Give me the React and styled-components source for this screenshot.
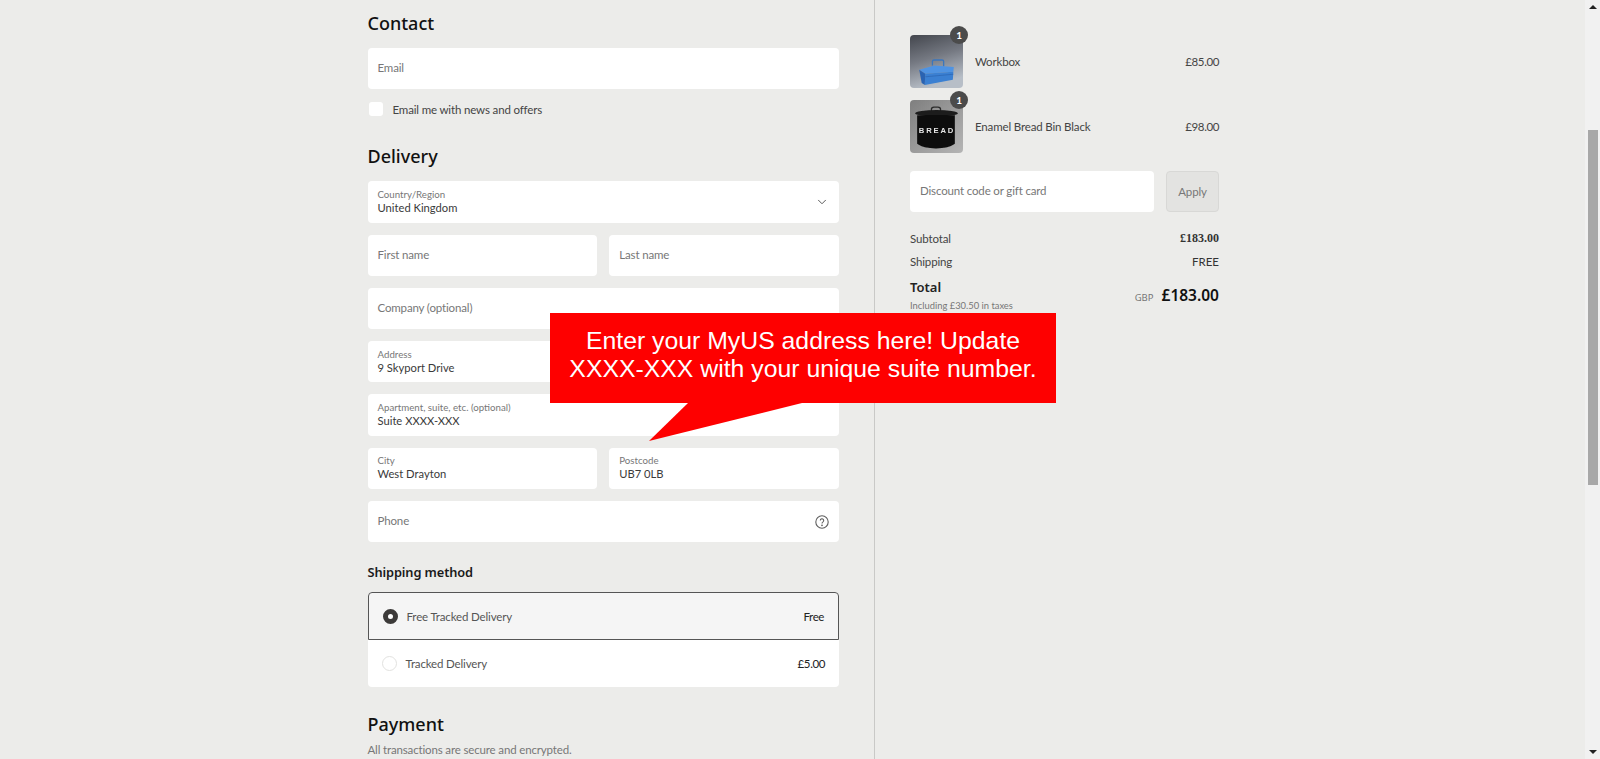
import React from 'react'
import styled, { createGlobalStyle } from 'styled-components'
import { ChevronDown } from 'lucide-react'

const GlobalStyle = createGlobalStyle`
  html, body {
    margin: 0;
    padding: 0;
    height: 100%;
    overflow: hidden;
    background: #ececea;
  }
  * { box-sizing: border-box; }
`

const Page = styled.div`
  position: relative;
  display: flex;
  height: 759px;
  overflow: hidden;
  font-family: Lato, "Noto Sans", "Liberation Sans", sans-serif;
  font-size: 11.5px;
  letter-spacing: -0.15px;
  color: #333;
  background: #ececea;
`

const FormColumn = styled.main`
  width: 875px;
  padding: 11px 35px 0 367.5px;
  border-right: 1px solid #c9c9c7;
`

const SummaryColumn = styled.aside`
  flex: 1;
  padding: 35px 0 0 35px;
`

const Heading = styled.h2`
  margin: ${p => p.$top || 0}px 0 ${p => p.$bottom || 0}px;
  font-family: "Noto Sans", sans-serif;
  font-size: 18px;
  font-weight: 500;
  line-height: 24px;
  letter-spacing: 0;
  color: #111;
`

const SubHeading = styled.h3`
  margin: 20px 0 10px;
  font-family: "Noto Sans", sans-serif;
  font-size: 12.8px;
  font-weight: 600;
  line-height: 20px;
  letter-spacing: -0.1px;
  color: #1a1a1a;
`

const Fields = styled.div`
  display: flex;
  flex-direction: column;
  gap: 12px;
`

const Row = styled.div`
  display: grid;
  grid-template-columns: 1fr 1fr;
  gap: 12px;
`

const Field = styled.div`
  display: flex;
  align-items: center;
  justify-content: space-between;
  height: 41.3px;
  padding: 0 10px;
  background: #fff;
  border-radius: 4px;
`

const FieldText = styled.div`
  display: flex;
  flex-direction: column;
  padding-bottom: 1px;
`

const Placeholder = styled.span`
  padding-bottom: 2px;
  color: #777;
`

const FloatLabel = styled.span`
  font-size: 9.7px;
  line-height: 13px;
  letter-spacing: 0;
  color: #777;
`

const FloatValue = styled.span`
  font-size: 11.2px;
  line-height: 14px;
  letter-spacing: 0;
  color: #3a3a3a;
`

const CheckRow = styled.label`
  display: flex;
  align-items: center;
  gap: 10px;
  height: 14px;
  margin-top: 13px;
  color: #444;
`

const CheckBox = styled.span`
  width: 14px;
  height: 14px;
  margin-left: 1px;
  background: #fff;
  border-radius: 3px;
`

const Methods = styled.div`
  background: #fff;
  border-radius: 4px;
`

const Method = styled.div`
  display: flex;
  align-items: center;
  height: 47.5px;
  padding: 0 14px;
  border-radius: ${p => (p.$selected ? '4px 4px 0 0' : '0')};
  background: ${p => (p.$selected ? '#f5f5f5' : 'transparent')};
  border: ${p => (p.$selected ? '1px solid #555' : 'none')};
`

const Radio = styled.span`
  width: 15px;
  height: 15px;
  margin-right: 9px;
  border-radius: 50%;
  background: #fff;
  border: ${p => (p.$on ? '5px solid #3c3a39' : '1px solid #e2e2e0')};
`

const MethodName = styled.span`
  flex: 1;
  color: #555;
`

const MethodPrice = styled.span`
  letter-spacing: -0.4px;
  color: #222;
`

const Note = styled.p`
  margin: 6px 0 0;
  line-height: 16px;
  color: #777;
`

const Item = styled.div`
  display: flex;
  align-items: center;
  height: 53px;
  margin-bottom: 12px;
`

const Thumb = styled.div`
  position: relative;
  width: 53px;
  height: 53px;
  margin-right: 12px;
  svg { display: block; border-radius: 4px; }
`

const Badge = styled.span`
  position: absolute;
  top: -9px;
  right: -5px;
  display: flex;
  align-items: center;
  justify-content: center;
  width: 18px;
  height: 18px;
  border-radius: 50%;
  background: #4b4b4b;
  color: #fff;
  font-size: 10px;
  font-weight: 700;
`

const ItemName = styled.span`
  flex: 1;
  color: #444;
`

const Summary = styled.div`
  width: 309px;
`

const ItemPrice = styled.span`
  letter-spacing: -0.4px;
  color: #444;
`

const DiscountRow = styled.div`
  display: flex;
  gap: 12px;
  margin: 18px 0 18px;
`

const DiscountInput = styled(Field)`
  flex: 1;
  height: 41px;
`

const ApplyButton = styled.button`
  width: 53px;
  height: 41px;
  padding: 0;
  border: 1px solid #d8d8d6;
  border-radius: 4px;
  background: #e3e3e1;
  color: #777;
  font: inherit;
  letter-spacing: inherit;
`

const Line = styled.div`
  display: flex;
  justify-content: space-between;
  align-items: center;
  height: 16px;
  margin-bottom: 7px;
  color: #444;
`

const Amount = styled.span`
  font-family: ${p => (p.$serif ? '"Liberation Serif", serif' : 'inherit')};
  font-weight: ${p => (p.$serif ? 700 : 400)};
  font-size: ${p => (p.$serif ? '12px' : 'inherit')};
  letter-spacing: 0;
  color: #333;
`

const TotalRow = styled.div`
  display: flex;
  justify-content: space-between;
  align-items: center;
  margin-top: 9px;
`

const TotalLabel = styled.div`
  font-family: "Noto Sans", sans-serif;
  font-size: 13px;
  font-weight: 600;
  line-height: 18px;
  letter-spacing: 0;
  color: #222;
`

const TaxNote = styled.div`
  margin-top: 4px;
  font-size: 9.4px;
  line-height: 12px;
  letter-spacing: 0;
  color: #777;
`

const TotalAmount = styled.div`
  display: flex;
  align-items: baseline;
  gap: 8px;
  font-family: "Noto Sans", sans-serif;
  letter-spacing: 0;
  span { font-size: 9.5px; color: #777; }
  strong { font-size: 15.5px; font-weight: 600; color: #111; }
`

const Callout = styled.div`
  position: absolute;
  left: 550px;
  top: 313px;
  width: 506px;
  height: 90px;
  display: flex;
  align-items: center;
  justify-content: center;
  padding-bottom: 6px;
  background: #fe0000;
  color: #fff;
  font-family: "Liberation Sans", Arial, sans-serif;
  font-size: 24.8px;
  line-height: 28px;
  letter-spacing: 0;
  text-align: center;
`

const CalloutTail = styled.svg`
  position: absolute;
  left: 99px;
  top: 90px;
`

const Scrollbar = styled.div`
  position: relative;
  flex: none;
  width: 15px;
  background: #f1f1f1;
`

const ScrollThumb = styled.div`
  position: absolute;
  left: 3px;
  right: 2px;
  top: 130px;
  height: 355px;
  background: #a8a8a8;
`

const ScrollArrow = styled.span`
  position: absolute;
  left: 4px;
  ${p => (p.$down ? 'bottom: 5px;' : 'top: 5px;')}
  border-left: 4px solid transparent;
  border-right: 4px solid transparent;
  ${p => (p.$down ? 'border-top: 4px solid #222;' : 'border-bottom: 4px solid #222;')}
`

function WorkboxImage() {
  return (
    <svg width="53" height="53" viewBox="0 0 52 52">
      <defs>
        <linearGradient id="wbBg" x1="0" y1="0" x2="0.3" y2="1">
          <stop offset="0" stopColor="#43464d" />
          <stop offset="0.5" stopColor="#757982" />
          <stop offset="1" stopColor="#b7bec7" />
        </linearGradient>
        <filter id="soft"><feGaussianBlur stdDeviation="0.45" /></filter>
      </defs>
      <rect width="52" height="52" fill="url(#wbBg)" />
      <g filter="url(#soft)">
        <path d="M22 30v-4q0-1.500 1.500-1.500h8q1.500 0 1.500 1.500v5" fill="none" stroke="#3a76bd" strokeWidth="1.300" />
        <path d="M9 34L24 30 43 31.500 42.500 36 15 38z" fill="#4f93e2" />
        <path d="M15 38L42.500 36 42 44 14.500 49z" fill="#3a80d2" />
        <path d="M9 34L15 38 14.500 49 11.500 47z" fill="#2b64b2" />
        <path d="M15 41L42.500 38.500" stroke="#2b64b2" strokeWidth="0.700" />
      </g>
    </svg>
  )
}

function BreadBinImage() {
  return (
    <svg width="53" height="53" viewBox="0 0 52 52">
      <defs>
        <linearGradient id="bbBg" x1="0" y1="0" x2="1" y2="1">
          <stop offset="0" stopColor="#7f7f7f" />
          <stop offset="1" stopColor="#b5b5b5" />
        </linearGradient>
        <filter id="soft2"><feGaussianBlur stdDeviation="0.35" /></filter>
      </defs>
      <rect width="52" height="52" fill="url(#bbBg)" />
      <g filter="url(#soft2)">
        <path d="M21 12V9.500q0-2.500 2.500-2.500h4q2.500 0 2.500 2.500V12" fill="none" stroke="#2b2b2b" strokeWidth="1.300" />
        <ellipse cx="26" cy="13" rx="21" ry="3.200" fill="#1d1d1d" />
        <path d="M7 15h37v28q-6 4.500-18.500 4.500T7 43z" fill="#0b0b0b" />
        <text x="26.500" y="32" textAnchor="middle" fontFamily="Liberation Sans, sans-serif" fontSize="7.500" fontWeight="700" letterSpacing="1.800" fill="#e6e6e6">BREAD</text>
      </g>
    </svg>
  )
}

function HelpIcon() {
  return (
    <svg width="14" height="14" viewBox="0 0 14 14" fill="none" stroke="#5f5f5f" strokeWidth="1.100">
      <circle cx="7" cy="7" r="6.200" />
      <path d="M5.300 5.500a1.700 1.700 0 1 1 2.700 1.400c-.6.4-1 .7-1 1.500" />
      <circle cx="7" cy="10.300" r=".35" fill="#5f5f5f" />
    </svg>
  )
}

function FloatField({ label, value, children }) {
  return (
    <Field>
      <FieldText>
        <FloatLabel>{label}</FloatLabel>
        <FloatValue>{value}</FloatValue>
      </FieldText>
      {children}
    </Field>
  )
}

function PlainField({ text, children }) {
  return (
    <Field>
      <Placeholder>{text}</Placeholder>
      {children}
    </Field>
  )
}

export default function App() {
  return (
    <Page>
      <GlobalStyle />
      <FormColumn>
        <Heading $bottom={13}>Contact</Heading>
        <PlainField text="Email" />
        <CheckRow>
          <CheckBox />
          Email me with news and offers
        </CheckRow>

        <Heading $top={28} $bottom={13}>Delivery</Heading>
        <Fields>
          <FloatField label="Country/Region" value="United Kingdom">
            <ChevronDown size={14} color="#444" strokeWidth={1.5} />
          </FloatField>
          <Row>
            <PlainField text="First name" />
            <PlainField text="Last name" />
          </Row>
          <PlainField text="Company (optional)" />
          <FloatField label="Address" value="9 Skyport Drive" />
          <FloatField label="Apartment, suite, etc. (optional)" value="Suite XXXX-XXX" />
          <Row>
            <FloatField label="City" value="West Drayton" />
            <FloatField label="Postcode" value="UB7 0LB" />
          </Row>
          <PlainField text="Phone">
            <HelpIcon />
          </PlainField>
        </Fields>

        <SubHeading>Shipping method</SubHeading>
        <Methods>
          <Method $selected>
            <Radio $on />
            <MethodName>Free Tracked Delivery</MethodName>
            <MethodPrice>Free</MethodPrice>
          </Method>
          <Method>
            <Radio />
            <MethodName>Tracked Delivery</MethodName>
            <MethodPrice>£5.00</MethodPrice>
          </Method>
        </Methods>

        <Heading $top={24.5}>Payment</Heading>
        <Note>All transactions are secure and encrypted.</Note>
      </FormColumn>

      <SummaryColumn>
        <Summary>
          <Item>
            <Thumb>
              <WorkboxImage />
              <Badge>1</Badge>
            </Thumb>
            <ItemName>Workbox</ItemName>
            <ItemPrice>£85.00</ItemPrice>
          </Item>
          <Item>
            <Thumb>
              <BreadBinImage />
              <Badge>1</Badge>
            </Thumb>
            <ItemName>Enamel Bread Bin Black</ItemName>
            <ItemPrice>£98.00</ItemPrice>
          </Item>
          <DiscountRow>
            <DiscountInput>
              <Placeholder>Discount code or gift card</Placeholder>
            </DiscountInput>
            <ApplyButton>Apply</ApplyButton>
          </DiscountRow>
          <Line>
            <span>Subtotal</span>
            <Amount $serif>£183.00</Amount>
          </Line>
          <Line>
            <span>Shipping</span>
            <Amount>FREE</Amount>
          </Line>
          <TotalRow>
            <div>
              <TotalLabel>Total</TotalLabel>
              <TaxNote>Including £30.50 in taxes</TaxNote>
            </div>
            <TotalAmount>
              <span>GBP</span>
              <strong>£183.00</strong>
            </TotalAmount>
          </TotalRow>
        </Summary>
      </SummaryColumn>

      <Scrollbar>
        <ScrollArrow />
        <ScrollThumb />
        <ScrollArrow $down />
      </Scrollbar>

      <Callout>
        <div>
          Enter your MyUS address here! Update
          <br />
          XXXX-XXX with your unique suite number.
        </div>
        <CalloutTail width="155" height="40" viewBox="0 0 155 40">
          <path d="M39 0L0 38 153 0z" fill="#fe0000" />
        </CalloutTail>
      </Callout>
    </Page>
  )
}
